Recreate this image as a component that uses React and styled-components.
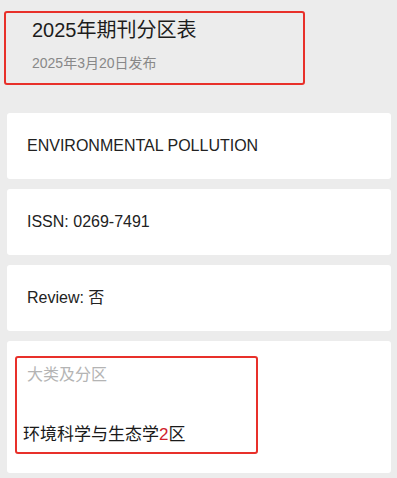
import React from "react";
import styled, { createGlobalStyle } from "styled-components";

const Global = createGlobalStyle`
  html, body { margin: 0; padding: 0; background: #ececec; }
  body { font-family: "Liberation Sans", Arial, "Noto Sans CJK SC", sans-serif; }
  #root { min-height: 478px; }
`;

const Page = styled.div`
  padding: 11px 6px 10px 7px;
  display: flex;
  flex-direction: column;
`;

const Header = styled.div`
  box-sizing: border-box;
  width: 301px;
  height: 74px;
  margin-left: -3px;
  margin-bottom: 28px;
  border: 2px solid #e8302a;
  border-radius: 3px;
  padding: 5px 0 0 26px;
  display: flex;
  flex-direction: column;
  gap: 11px;
`;

const Title = styled.div`
  font-size: 20px;
  line-height: 24px;
  color: #1c1c1c;
`;

const Sub = styled.div`
  font-size: 14px;
  line-height: 20px;
  color: #888888;
`;

const List = styled.div`
  display: flex;
  flex-direction: column;
  gap: 10px;
`;

const Card = styled.div`
  box-sizing: border-box;
  background: #ffffff;
  border-radius: 3px;
  height: ${(p) => p.$h || 66}px;
  padding: ${(p) => (p.$boxed ? "15px 8px" : "0 20px")};
  display: flex;
  align-items: ${(p) => (p.$boxed ? "flex-start" : "center")};
  font-size: 16px;
  line-height: 20px;
  color: #222222;
`;

const Highlight = styled.div`
  box-sizing: border-box;
  width: 243px;
  height: 98px;
  border: 2px solid #e8302a;
  border-radius: 3px;
  padding: 7px 0 6px 6px;
  display: flex;
  flex-direction: column;
  justify-content: space-between;
`;

const Label = styled.div`
  font-size: 16px;
  line-height: 20px;
  color: #b4b4b4;
  padding-left: 4px;
`;

const Value = styled.div`
  font-size: 17px;
  line-height: 22px;
  color: #1a1a1a;
`;

const Red = styled.span`
  color: #d0202a;
`;

export default function App() {
  return (
    <>
      <Global />
      <Page>
        <Header>
          <Title>2025年期刊分区表</Title>
          <Sub>2025年3月20日发布</Sub>
        </Header>
        <List>
          <Card>ENVIRONMENTAL POLLUTION</Card>
          <Card>ISSN: 0269-7491</Card>
          <Card>Review: 否</Card>
          <Card $h={132} $boxed>
            <Highlight>
              <Label>大类及分区</Label>
              <Value>
                环境科学与生态学<Red>2</Red>区
              </Value>
            </Highlight>
          </Card>
        </List>
      </Page>
    </>
  );
}
